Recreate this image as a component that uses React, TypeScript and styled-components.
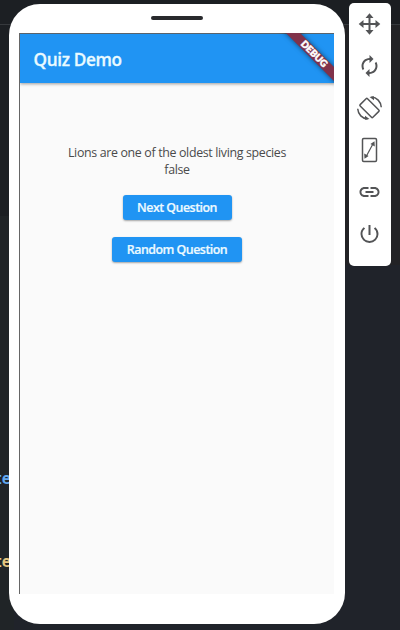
import React from "react";
import styled, { createGlobalStyle } from "styled-components";
import { MdAutorenew, MdPowerSettingsNew, MdLink } from "react-icons/md";

const GlobalStyle = createGlobalStyle`
  * { box-sizing: border-box; }
  body { margin: 0; background: #20232a; overflow: hidden; }
`;

const Desktop = styled.main`
  display: flex;
  width: 400px;
  height: 630px;
  overflow: hidden;
  font-family: "Open Sans", "Noto Sans", sans-serif;
  background:
    linear-gradient(#36393d, #36393d) 0 24px / 100% 1px no-repeat,
    linear-gradient(90deg, #202427 0 14px, transparent 14px) 0 216px / 100% 414px no-repeat,
    linear-gradient(90deg, #1c1f23 0 340px, transparent 340px) 0 0 / 100% 216px no-repeat,
    linear-gradient(#1b1d21 0 25px, #222225 25px 265px, #20232a 265px);
`;

const Editor = styled.div`
  width: 9px;
  height: 630px;
  padding-top: 466px;
  display: flex;
  flex-direction: column;
  align-items: flex-end;
  gap: 57px;
  flex: none;
`;

const Code = styled.span<{ $color: string }>`
  color: ${(p) => p.$color};
  font: 700 15.5px/26px "DejaVu Sans Mono", monospace;
  letter-spacing: -0.6px;
  margin-right: -1.5px;
`;

const Phone = styled.section`
  width: 336px;
  height: 620px;
  margin-top: 4px;
  padding: 29px 11px 30px 10px;
  border-radius: 31px;
  background: #fff;
  flex: none;
  position: relative;
`;

const Speaker = styled.div`
  position: absolute;
  left: 142px;
  top: 12px;
  width: 52px;
  height: 4px;
  border-radius: 2px;
  background: #292a2d;
`;

const Screen = styled.div`
  width: 315px;
  height: 561px;
  border-left: 1px solid #666;
  background: #fafafa;
  overflow: hidden;
  position: relative;
`;

const AppBar = styled.header`
  height: 50px;
  border-top: 1px solid #59636c;
  padding: 2px 0 0 13.5px;
  display: flex;
  align-items: center;
  background: #2094f3;
  box-shadow: 0 1px 3px rgba(0, 0, 0, 0.38);
`;

const Title = styled.h1`
  margin: 0;
  color: #e9faff;
  font-size: 17.2px;
  line-height: 24px;
  font-weight: 600;
  letter-spacing: -0.35px;
  white-space: nowrap;
  -webkit-text-stroke: 0.3px #e9faff;
`;

const Ribbon = styled.div`
  position: absolute;
  width: 90px;
  height: 10px;
  left: 248.5px;
  top: 15.5px;
  transform: rotate(45deg);
  background: #81324a;
  box-shadow: 0 0 5px rgba(0, 0, 0, 0.55);
  color: #fff;
  font: 900 9.5px/10px Lato, sans-serif;
  -webkit-text-stroke: 0.5px #fff;
  text-align: center;
`;

const Content = styled.div`
  display: flex;
  flex-direction: column;
  align-items: center;
  padding-top: 62px;
`;

const Question = styled.p`
  width: 240px;
  margin: 0 0 17px;
  text-align: center;
  color: #4a4a4b;
  font-size: 12.4px;
  line-height: 16.5px;
  letter-spacing: -0.34px;
`;

const RaisedButton = styled.button<{ $width: number }>`
  width: ${(p) => p.$width}px;
  height: 25px;
  margin: 0 0 17px;
  padding: 0;
  border: 0;
  border-radius: 3px;
  background: #2094f3;
  color: #edfaff;
  font: 600 12.4px/25px "Open Sans", sans-serif;
  letter-spacing: -0.5px;
  -webkit-text-stroke: 0.2px #edfaff;
  white-space: nowrap;
  box-shadow: 0 1px 2px rgba(0, 0, 0, 0.35);
`;

const Toolbar = styled.aside`
  width: 42px;
  height: 263px;
  margin: 3px 0 0 3.5px;
  padding-top: 9px;
  border-radius: 5px;
  background: #fff;
  color: #535456;
  display: flex;
  flex-direction: column;
  align-items: center;
  gap: 18px;
  flex: none;
  & > svg { width: 24px; height: 24px; flex: none; transform: translateX(-0.5px); }
`;

const MoveIcon = () => (
  <svg viewBox="0 0 24 24" fill="currentColor">
    <path d="M11 5h2v14h-2zM5 11h14v2H5z" />
    <path d="M12 1.2 16 6H8zM12 22.8 16 18H8zM1.2 12 6 8v8zM22.8 12 18 8v8z" />
  </svg>
);

const RotateIcon = () => (
  <svg viewBox="0 0 24 24" overflow="visible" fill="none" stroke="currentColor" strokeWidth="1.5" strokeLinejoin="round">
    <rect x="6.8" y="3" width="10.4" height="18" rx="1" transform="rotate(-45 12 12)" />
    <path d="M14 1.1C19.2 1.3 23.4 5.6 23.8 11.2M10 22.9C4.8 22.7.6 18.4.2 12.8" />
    <path d="M12 1 16.5.3V4.2ZM12 23 7.5 23.7V19.8Z" fill="currentColor" stroke="none" />
  </svg>
);

const ResizeIcon = () => (
  <svg viewBox="0 0 24 24" overflow="visible" fill="none" stroke="currentColor">
    <rect x="5" y=".5" width="14" height="23" rx="1.2" strokeWidth="1.5" />
    <path d="M8.4 19 15.8 5.2" strokeWidth="1.2" />
    <path d="m17 3.2.3 5.3-4.4-2.4ZM7 20.8l-.3-5.3 4.4 2.4Z" fill="currentColor" stroke="none" />
  </svg>
);

export default function App() {
  return (
    <>
      <GlobalStyle />
      <Desktop>
        <Editor>
          <Code $color="#62a8f0">te</Code>
          <Code $color="#e3c681">te</Code>
        </Editor>
        <Phone>
          <Speaker />
          <Screen>
            <AppBar>
              <Title>Quiz Demo</Title>
            </AppBar>
            <Content>
              <Question>
                Lions are one of the oldest living species
                <br />
                false
              </Question>
              <RaisedButton $width={109}>Next Question</RaisedButton>
              <RaisedButton $width={130}>Random Question</RaisedButton>
            </Content>
            <Ribbon>DEBUG</Ribbon>
          </Screen>
        </Phone>
        <Toolbar>
          <MoveIcon />
          <MdAutorenew />
          <RotateIcon />
          <ResizeIcon />
          <MdLink />
          <MdPowerSettingsNew />
        </Toolbar>
      </Desktop>
    </>
  );
}
